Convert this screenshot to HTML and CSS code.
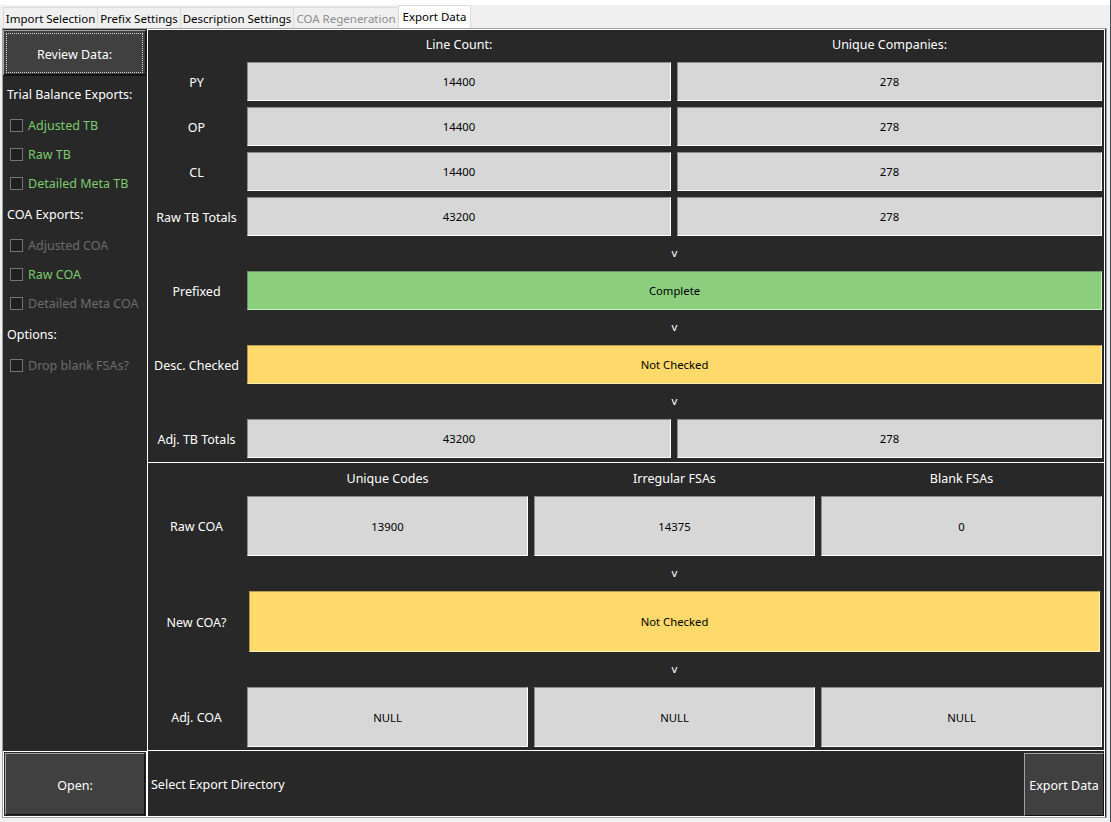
FILE: index.html
```html
<!DOCTYPE html>
<html lang="en">
<head>
<meta charset="utf-8">
<title>Export Data</title>
<link rel="stylesheet" href="styles.css">
</head>
<body>
<div class="window">
  <div class="tabbar">
    <div class="tab t1">Import Selection</div>
    <div class="tab t2">Prefix Settings</div>
    <div class="tab t3">Description Settings</div>
    <div class="tab t4 disabled">COA Regeneration</div>
    <div class="tab t5 active">Export Data</div>
  </div>

  <div class="content">
    <aside class="sidebar">
      <button class="btn btn-review">Review Data:</button>
      <div class="heading">Trial Balance Exports:</div>
      <div class="check green"><span class="box"></span>Adjusted TB</div>
      <div class="check green"><span class="box"></span>Raw TB</div>
      <div class="check green"><span class="box"></span>Detailed Meta TB</div>
      <div class="heading">COA Exports:</div>
      <div class="check off"><span class="box"></span>Adjusted COA</div>
      <div class="check green"><span class="box"></span>Raw COA</div>
      <div class="check off"><span class="box"></span>Detailed Meta COA</div>
      <div class="heading">Options:</div>
      <div class="check off"><span class="box"></span>Drop blank FSAs?</div>
    </aside>

    <div class="main">
      <section class="frame tb">
        <div class="colhead c2">Line Count:</div>
        <div class="colhead c3">Unique Companies:</div>

        <div class="rowlabel">PY</div>
        <div class="cell">14400</div>
        <div class="cell">278</div>

        <div class="rowlabel">OP</div>
        <div class="cell">14400</div>
        <div class="cell">278</div>

        <div class="rowlabel">CL</div>
        <div class="cell">14400</div>
        <div class="cell">278</div>

        <div class="rowlabel">Raw TB Totals</div>
        <div class="cell">43200</div>
        <div class="cell">278</div>

        <div class="arrow">v</div>

        <div class="rowlabel">Prefixed</div>
        <div class="cell wide ok">Complete</div>

        <div class="arrow">v</div>

        <div class="rowlabel">Desc. Checked</div>
        <div class="cell wide warn">Not Checked</div>

        <div class="arrow">v</div>

        <div class="rowlabel">Adj. TB Totals</div>
        <div class="cell">43200</div>
        <div class="cell">278</div>
      </section>

      <section class="frame coa">
        <div class="colhead c2">Unique Codes</div>
        <div class="colhead c3">Irregular FSAs</div>
        <div class="colhead c4">Blank FSAs</div>

        <div class="rowlabel">Raw COA</div>
        <div class="cell">13900</div>
        <div class="cell">14375</div>
        <div class="cell">0</div>

        <div class="arrow">v</div>

        <div class="rowlabel">New COA?</div>
        <div class="cell wide warn inset">Not Checked</div>

        <div class="arrow">v</div>

        <div class="rowlabel">Adj. COA</div>
        <div class="cell">NULL</div>
        <div class="cell">NULL</div>
        <div class="cell">NULL</div>
      </section>
    </div>

    <div class="open-cell">
      <button class="btn btn-open">Open:</button>
    </div>
    <div class="bottombar">
      <span class="dir">Select Export Directory</span>
      <button class="btn btn-export">Export Data</button>
    </div>
  </div>
</div>
</body>
</html>
```

FILE: styles.css
```css
* {
  box-sizing: border-box;
}

html, body {
  margin: 0;
  padding: 0;
}

body {
  width: 1111px;
  height: 822px;
  overflow: hidden;
  background: #f0f0f0;
  font-family: "Segoe UI", "Noto Sans", "Open Sans", sans-serif;
  font-size: 12.5px;
  color: #ffffff;
}

.window {
  width: 1111px;
  height: 822px;
  border-right: 1px solid #44504f;
}

/* ---------- tabs ---------- */
.tabbar {
  height: 28px;
  display: flex;
  align-items: flex-end;
  padding-left: 3px;
  background: linear-gradient(#ffffff 0 5px, #f0f0f0 5px);
}

.tab {
  height: 21px;
  display: flex;
  align-items: center;
  justify-content: center;
  font-size: 11.5px;
  color: #000;
  background: #f0f0f0;
  border: 1px solid #d9d9d9;
  border-bottom: none;
  margin-right: -1px;
  white-space: nowrap;
}

.t1 { width: 95px; }
.t2 { width: 84px; }
.t3 { width: 114px; }
.t4 { width: 106px; }
.t5 { width: 73px; }

.tab.disabled {
  color: #8d8d8d;
}

.tab.active {
  height: 23px;
  background: #ffffff;
  padding-bottom: 2px;
  position: relative;
  z-index: 1;
}

/* ---------- content ---------- */
.content {
  margin-left: 2px;
  width: 1105px;
  height: 790px;
  background: #282828;
  border: 1px solid #a0a0a0;
  display: grid;
  grid-template-columns: 144px 958px;
  grid-template-rows: 722px 66px;
}

/* ---------- sidebar ---------- */
.sidebar {
  padding-top: 1px;
  display: flex;
  flex-direction: column;
}

.btn {
  font-family: inherit;
  font-size: 12.5px;
  color: #ffffff;
  background: #404040;
  border: 1px solid;
  border-color: #a3a3a3 #121212 #121212 #a3a3a3;
  padding: 0;
  cursor: default;
}

.btn-review {
  width: 143px;
  height: 46px;
  flex: none;
  margin-bottom: 2px;
  border-bottom-width: 2px;
  padding-top: 3px;
  outline: 1px dotted #d8d8d8;
  outline-offset: -4px;
}

.heading {
  height: 33px;
  flex: none;
  line-height: 33px;
  padding-left: 4px;
  color: #ffffff;
  font-size: 12.5px;
  white-space: nowrap;
}

.check {
  height: 29px;
  flex: none;
  display: flex;
  align-items: center;
  padding-left: 7px;
  gap: 5px;
  white-space: nowrap;
}

.check.green {
  color: #7ccb6d;
}

.check.off {
  color: #6c6c6c;
}

.box {
  width: 13px;
  height: 13px;
  border: 1px solid #747474;
  background: #202020;
  flex: none;
}

/* ---------- main frames ---------- */
.main {
  display: flex;
  flex-direction: column;
}

.frame {
  display: grid;
  border: 1px solid #ffffff;
  column-gap: 6px;
  row-gap: 6px;
  padding-right: 2px;
}

.tb {
  height: 434px;
  grid-template-columns: 93px 424px 425px;
  grid-template-rows: 26px 39px 39px 39px 39px 23px 39px 23px 39px 23px 39px;
  padding-bottom: 4px;
}

.coa {
  height: 288px;
  border-top: none;
  grid-template-columns: 93px 281px 281px 281px;
  grid-template-rows: 27px 60px 23px 61px 23px 60px;
  padding-bottom: 3px;
}

.colhead {
  text-align: center;
  line-height: 20px;
  padding-top: 5px;
  white-space: nowrap;
}

.coa .colhead {
  padding-top: 6px;
}

.colhead.c2 { grid-column: 2; }
.colhead.c3 { grid-column: 3; }
.colhead.c4 { grid-column: 4; }

.rowlabel {
  grid-column: 1;
  display: flex;
  align-items: center;
  justify-content: center;
  padding-left: 4px;
  padding-top: 1px;
  white-space: nowrap;
}

.cell {
  display: flex;
  align-items: center;
  justify-content: center;
  background: #d7d7d7;
  color: #000000;
  font-size: 11.3px;
  border: 1px solid;
  border-color: #8c8c8c #ffffff #ffffff #8c8c8c;
}

.cell.wide {
  grid-column: 2 / -1;
}

.cell.ok {
  background: #8bce7e;
  border-color: #6c8f66 #c9f5c0 #c9f5c0 #6c8f66;
}

.cell.warn {
  background: #ffd96a;
  border-color: #b39a52 #fff0b8 #fff0b8 #b39a52;
}

.cell.inset {
  margin: 0 2px;
}

.arrow {
  grid-column: 2 / -1;
  display: flex;
  align-items: center;
  justify-content: center;
  font-size: 11.5px;
  line-height: 1;
  padding-bottom: 1px;
}

/* ---------- bottom ---------- */
.open-cell {
  border: 1px solid #ffffff;
  padding: 1px;
  display: flex;
}

.btn-open {
  flex: 1;
  padding-top: 2px;
}

.bottombar {
  border: 1px solid #ffffff;
  border-top: none;
  display: flex;
  align-items: stretch;
  justify-content: space-between;
  padding-top: 2px;
}

.dir {
  align-self: center;
  padding-left: 3px;
}

.btn-export {
  width: 80px;
  white-space: nowrap;
  padding-top: 1px;
}
```
